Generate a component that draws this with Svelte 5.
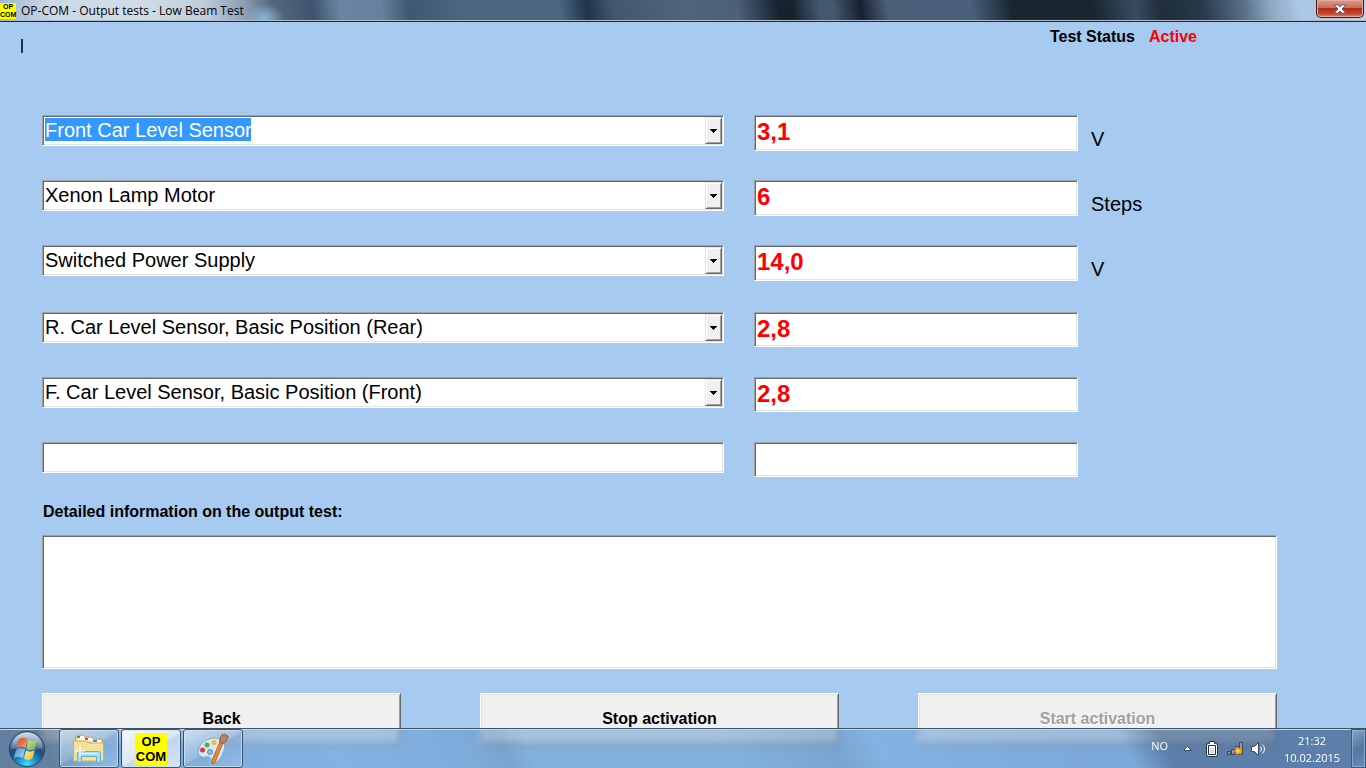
<script lang="ts">
	type Field = { name: string; value: string; unit: string; selected?: boolean };

	const groups: Field[][] = [
		[
			{ name: 'Front Car Level Sensor', value: '3,1', unit: 'V', selected: true },
			{ name: 'Xenon Lamp Motor', value: '6', unit: 'Steps' },
			{ name: 'Switched Power Supply', value: '14,0', unit: 'V' }
		],
		[
			{ name: 'R. Car Level Sensor, Basic Position (Rear)', value: '2,8', unit: '' },
			{ name: 'F. Car Level Sensor, Basic Position (Front)', value: '2,8', unit: '' },
			{ name: '', value: '', unit: '' }
		]
	];
</script>

<div class="window">
	<header class="titlebar">
		<span class="app-icon"><span>OP</span><span>COM</span></span>
		<h1>OP-COM - Output tests - Low Beam Test</h1>
		<button class="close" aria-label="Close">
			<svg width="12" height="10" viewBox="0 0 12 10">
				<path d="M1 .8h3.2L6 2.900 7.800.8H11v1L8 5l3 3.200v1H7.800L6 7.100 4.200 9.200H1v-1L4 5 1 1.800z" fill="#fff" stroke="#525a70" />
			</svg>
		</button>
	</header>

	<main>
		<div class="status-row">
			<span class="mark"></span>
			<div class="status"><span>Test Status</span><span class="active">Active</span></div>
		</div>

		<div class="fields">
			{#each groups as group}
				<div class="group">
					{#each group as field}
						<div class="row">
							<div class="combo">
								{#if field.name}
									<select class="box" class:selected={field.selected} aria-label="Measured value">
										<option>{field.name}</option>
									</select>
									<span class="arrow">
										<svg width="7" height="4" viewBox="0 0 7 4" shape-rendering="crispEdges"><path d="M0 0h7v1H6v1H5v1H4v1H3V3H2V2H1V1H0z" /></svg>
									</span>
								{:else}
									<input class="box" aria-label="Measured value" />
								{/if}
							</div>
							<input class="box value" value={field.value} aria-label="Reading" readonly />
							<span class="unit">{field.unit}</span>
						</div>
					{/each}
				</div>
			{/each}
		</div>

		<label for="info">Detailed information on the output test:</label>
		<textarea id="info" class="box" readonly></textarea>

		<div class="actions">
			<button>Back</button>
			<button>Stop activation</button>
			<button disabled>Start activation</button>
		</div>
	</main>
</div>

<footer class="taskbar">
	<button class="start" aria-label="Start">
		<svg width="38" height="38" viewBox="0 0 38 38">
			<defs>
				<radialGradient id="orb" cx=".5" cy=".95" r=".9">
					<stop offset="0" stop-color="#3fe6ff" />
					<stop offset=".3" stop-color="#1b93c8" />
					<stop offset=".6" stop-color="#1c4a78" />
					<stop offset="1" stop-color="#7d9ab2" />
				</radialGradient>
				<linearGradient id="shine" x2="0" y2="1">
					<stop offset="0" stop-color="#fff" stop-opacity=".65" />
					<stop offset="1" stop-color="#fff" stop-opacity=".1" />
				</linearGradient>
				<linearGradient id="red" x2="1" y2="1"><stop stop-color="#d8431d" /><stop offset="1" stop-color="#f9a26a" /></linearGradient>
				<linearGradient id="green" x2="1" y2="1"><stop stop-color="#d4e5a0" /><stop offset="1" stop-color="#6eaa35" /></linearGradient>
				<linearGradient id="blue" x2="1" y2="1"><stop stop-color="#3f8fd2" /><stop offset="1" stop-color="#b0dbf7" /></linearGradient>
				<linearGradient id="yellow" x2="1" y2="1"><stop stop-color="#fff0a0" /><stop offset="1" stop-color="#f5b324" /></linearGradient>
			</defs>
			<circle cx="19" cy="19" r="17.500" fill="url(#orb)" stroke="#243f5c" />
			<path d="M3.500 18a15.500 15.500 0 0 1 31 0q-15.500 6-31 0z" fill="url(#shine)" />
			<path d="M11 9.500q4-3 8.500-.5l-2 9q-4.500-2.500-9 0z" fill="url(#red)" />
			<path d="M20.500 10q4.500 2.500 9-.5l-2.500 9q-4 3-8.500.5z" fill="url(#green)" />
			<path d="M8 19.500q4.500-3 9 0l-2 8.500q-4.500-3-9 0z" fill="url(#blue)" />
			<path d="M18 20.500q4.500 2.500 8.500-.5l-2 8.500q-4.500 3-8.500 0z" fill="url(#yellow)" />
		</svg>
	</button>
	<button class="task" aria-label="Explorer">
		<svg width="34" height="32" viewBox="0 0 34 32">
			<path d="M3.500 27V4q0-2 2-2h5l2 2h8l1 2h9v21z" fill="#edd082" stroke="#c9a856" />
			<path d="M5 3h7v4H5z" fill="#fff" />
			<path d="M5 3h3v2H5z" fill="#28a847" />
			<path d="M12 5h8v3h-8z" fill="#fff" />
			<path d="M13 5h3v2h-3z" fill="#d94c2d" />
			<path d="M20 7h9v3h-9z" fill="#fff" />
			<path d="M21 7h4v2h-4z" fill="#3a90dc" />
			<path d="M1.500 9q0-1 1-1h12l2 2h14q1 0 1 1v16q0 1-1 1h-28q-1 0-1-1z" fill="#f6e199" stroke="#d3b25e" />
			<path d="M5.500 29.500v-9q0-2 2-2h19q2 0 2 2v9h-4v-6h-15v6z" fill="#a5ddf2" stroke="#64aed0" />
			<path d="M8 20.500h18" stroke="#e2f6fd" />
			<path d="M8 12v12M3 18h10" stroke="#fff" />
		</svg>
	</button>
	<button class="task current" aria-label="OP-COM">
		<span class="task-logo"><span>OP</span><span>COM</span></span>
	</button>
	<button class="task" aria-label="Paint">
		<svg width="34" height="32" viewBox="0 0 34 32">
			<path d="M2.500 18C3 10 11 5 19 5c8 0 11 6 9 12-2 6-4 10-8 12-3 1-5 0-5-2 0-3-3-4-6-3-4 1-7-2-6.500-6z" fill="#d5e8f6" stroke="#84a9c6" />
			<circle cx="6.500" cy="17" r="2.500" fill="#dd3c40" />
			<circle cx="11" cy="12" r="2.500" fill="#4fb043" />
			<circle cx="18" cy="9.500" r="2.500" fill="#f4bd32" />
			<circle cx="14" cy="19" r="2.500" fill="#8fbadd" stroke="#5b8fbe" />
			<path d="M24 9l3 1-7 17q-1 4-4 4-1-2 1-6z" fill="#e68a36" stroke="#b9672a" />
			<path d="M23.500 9q0-5 3-8l1 1 2-1 .5 1.500 2 .5q0 5-5 7.500z" fill="#b88560" stroke="#8b5c3e" />
		</svg>
	</button>

	<div class="tray">
		<span class="lang">NO</span>
		<svg width="9" height="5" viewBox="0 0 9 5"><path d="M.5 4.500l4-4 4 4z" fill="#fff" stroke="#344d68" /></svg>
		<svg class="battery" width="12" height="16" viewBox="0 0 12 16">
			<path d="M3.500 2.500v-2h5v2h1q2 0 2 2v9q0 2-2 2h-7q-2 0-2-2v-9q0-2 2-2z" fill="#fff" stroke="#222d3d" />
			<path d="M2.500 4.500h7v9h-7z" fill="#fff" stroke="#222d3d" />
			<path d="M4 7h4v5H4z" fill="#d6dde5" />
		</svg>
		<svg class="network" width="17" height="16" viewBox="0 0 17 16">
			<path d="M.5 10.500h3v3h-3zM4.500 8.500h3v5h-3zM8.500 5.500h3v8h-3zM12.500 1.500h3v12h-3z" fill="#8c9baa" stroke="#384858" />
			<path d="M11 5l1 2.500 2.500-1-1 2.500 2.500 1-2.500 1 1 2.500-2.500-1-1 2.500-1-2.500-2.500 1 1-2.500L6 10l2.500-1-1-2.500 2.500 1z" fill="#ff9d0a" />
			<circle cx="11" cy="10" r="2" fill="#ffc94a" />
		</svg>
		<svg width="16" height="16" viewBox="0 0 16 16">
			<path d="M.5 5.500h3l4-4v13l-4-4h-3z" fill="#fff" stroke="#374b61" />
			<path d="M9.500 5.500q2 2.500 0 5M11.500 3.500q4 4.500 0 9" fill="none" stroke="#fff" />
		</svg>
		<div class="clock"><span>21:32</span><span>10.02.2015</span></div>
	</div>
	<button class="desktop" aria-label="Show desktop"></button>
</footer>

<style>
	:global(body) {
		margin: 0;
		background: #a6caf0;
	}
	* { box-sizing: border-box; }
	button, input, select, textarea { font: inherit; margin: 0; }

	.window {
		font-family: 'Liberation Sans', Arial, sans-serif;
		font-size: 20px;
		color: #000;
		background: #a6caf0;
	}

	.titlebar {
		display: flex;
		align-items: flex-start;
		gap: 5px;
		height: 22px;
		padding-right: 2px;
		border-bottom: 1px solid #23262e;
		box-shadow: inset 0 -1px #b3bac3;
		background:
			radial-gradient(ellipse 20px 14px at 264px 18px, #87b5df, transparent),
			linear-gradient(80deg, #9fb6cd 0, #cbd9e8 4%, #d0dce9 10%, #c0cedd 15%, #8d9fb3 18%, #56697f 20%, #3f556e 23%, #6a85a2 25%, #66819d 28%, #3f5872 30%, #4c6782 34%, #4c6782 41%, #22344a 43%, #43586f 45%, #4f657e 50%, #4c6079 54%, #17222f 57%, #17222f 58%, #44586f 60%, #43576e 61%, #17222f 63%, #4c6079 65%, #4a617b 71%, #1a2733 74%, #1a2733 80%, #374b61 83%, #1f2d3c 85%, #2a3a4b 88%, #5a708a 91%, #8fa8c4 93%, #aac7e5 95%, #c0d0e0 100%);
	}
	.app-icon {
		display: flex;
		flex-direction: column;
		width: 16px;
		height: 16px;
		margin-top: 3px;
		background: #ff0;
		font-size: 7px;
		font-weight: bold;
		line-height: 8px;
		text-align: center;
	}
	h1 {
		flex: 1;
		margin: 0;
		font: 12px/22px 'Open Sans', 'Noto Sans', sans-serif;
	}
	.close {
		display: flex;
		align-items: center;
		justify-content: center;
		width: 48px;
		height: 18px;
		padding: 0;
		border: 1px solid #3c1b1f;
		border-top: 0;
		border-radius: 0 0 5px 5px;
		box-shadow: inset 0 0 0 1px #e2aaa0;
		background: linear-gradient(#dc9c8f 0, #cb6b59 45%, #b32d15 50%, #c8442c 80%, #e08a6c 100%);
	}

	main { padding: 0 89px 23px 42px; }

	.status-row {
		display: flex;
		justify-content: space-between;
		height: 93px;
		padding: 5px 80px 0 0;
	}
	.mark {
		width: 2px;
		height: 14px;
		margin: 12px 0 0 -21px;
		background: #1d2f55;
	}
	.status {
		display: flex;
		gap: 14px;
		font-size: 16px;
		font-weight: bold;
		line-height: 20px;
	}
	.active { color: #f00; }

	.fields {
		display: flex;
		flex-direction: column;
		gap: 32px;
	}
	.group {
		display: flex;
		flex-direction: column;
		gap: 30px;
	}
	.row {
		display: grid;
		grid-template-columns: 682fr 30px 324fr 13px 186fr;
		height: 35px;
	}
	.combo {
		position: relative;
		height: 31px;
	}
	.box {
		display: block;
		width: 100%;
		height: 100%;
		padding: 0 2px 2px;
		border: 1px solid;
		border-color: #a0a0a0 #fff #fff #a0a0a0;
		border-radius: 0;
		outline: 0;
		box-shadow: inset 1px 1px #696969, inset -1px -1px #e3e3e3;
		background: #fff;
		color: #000;
		appearance: none;
	}
	.selected {
		color: #fff;
		background: linear-gradient(#39f, #39f) 2px 2px / 206px 23px no-repeat #fff;
	}
	.selected option { color: #000; }
	.arrow {
		position: absolute;
		top: 2px;
		right: 2px;
		bottom: 2px;
		display: flex;
		align-items: center;
		justify-content: center;
		width: 17px;
		border: 1px solid;
		border-color: #e3e3e3 #696969 #696969 #e3e3e3;
		box-shadow: inset 1px 1px #fff, inset -1px -1px #a0a0a0;
		background: #f0f0f0;
		pointer-events: none;
	}
	.value {
		grid-column: 3;
		color: #f00;
		font-size: 24px;
		font-weight: bold;
	}
	.unit {
		grid-column: 5;
		padding-top: 12px;
		line-height: 24px;
	}

	label {
		display: block;
		margin: 25px 0 13px;
		padding-left: 1px;
		font-size: 16px;
		font-weight: bold;
		line-height: 20px;
	}
	textarea.box {
		height: 134px;
		resize: none;
	}

	.actions {
		display: flex;
		gap: 79px;
		margin-top: 24px;
	}
	.actions button {
		flex: 1;
		height: 52px;
		border: 1px solid;
		border-color: #fff #696969 #696969 #fff;
		box-shadow: inset 1px 1px #e3e3e3, inset -1px -1px #a0a0a0;
		background: #f0f0f0;
		color: #000;
		font-size: 16px;
		font-weight: bold;
	}
	.actions button:disabled {
		color: #a0a0a0;
		text-shadow: 1px 1px #fff;
	}

	.taskbar {
		position: fixed;
		right: 0;
		bottom: 0;
		left: 0;
		display: flex;
		height: 40px;
		border-top: 1px solid #3d5265;
		box-shadow: inset 0 1px #bcdcf2;
		background: linear-gradient(65deg, #3a5470a0 0, #3a5470a0 4%, #5a93cf90 8%, #6a9fd590 25%, #5f95cb90 34%, #5687b890 37%, #699ecf90 39%, #699ecf90 53%, #5687b890 61%, #6a9fd590 64%, #5b8fc890 80%, #5b8fc890 82%, #3a5d8ab0 85%, #3a5d8ab0 100%);
		backdrop-filter: blur(3px);
		font-family: 'Open Sans', 'Noto Sans', sans-serif;
		font-size: 12px;
	}
	.taskbar button { padding: 0; }
	.start {
		display: flex;
		align-items: center;
		justify-content: center;
		width: 54px;
		margin-right: 5px;
		border: 0;
		background: none;
	}
	.task {
		display: flex;
		align-items: center;
		justify-content: center;
		width: 60px;
		margin-right: 2px;
		border: 1px solid #355273;
		border-radius: 3px;
		box-shadow: inset 0 0 0 1px #d5e7f7b0;
		background: linear-gradient(150deg, #d5e5f3cc 0, #a9c6e2a0 48%, #84abd5a0 52%, #9bc4eda0 100%);
	}
	.current { background: linear-gradient(150deg, #f4f9fd 0, #dbe8f4 50%, #c0d7ee 55%, #d2e5f6 100%); }
	.task-logo {
		display: flex;
		flex-direction: column;
		width: 32px;
		height: 32px;
		padding-top: 1px;
		background: #ff0;
		color: #000;
		font: bold 13px/15px 'Liberation Sans', Arial, sans-serif;
		text-align: center;
	}

	.tray {
		display: flex;
		align-items: center;
		margin-left: auto;
		color: #fff;
	}
	.lang {
		margin: 0 15px 6px 0;
		font-size: 11px;
	}
	.battery { margin: 0 9px 0 14px; }
	.network { margin-right: 7px; }
	.clock {
		display: flex;
		flex-direction: column;
		width: 78px;
		margin-left: 6px;
		font-size: 11px;
		line-height: 17px;
		text-align: center;
	}
	.desktop {
		width: 15px;
		border: 1px solid #3a5878;
		box-shadow: inset 0 0 0 1px #a9c2dc90;
		background: linear-gradient(150deg, #a4bdd5a0, #49709a80 50%, #6f95bda0);
	}
</style>
